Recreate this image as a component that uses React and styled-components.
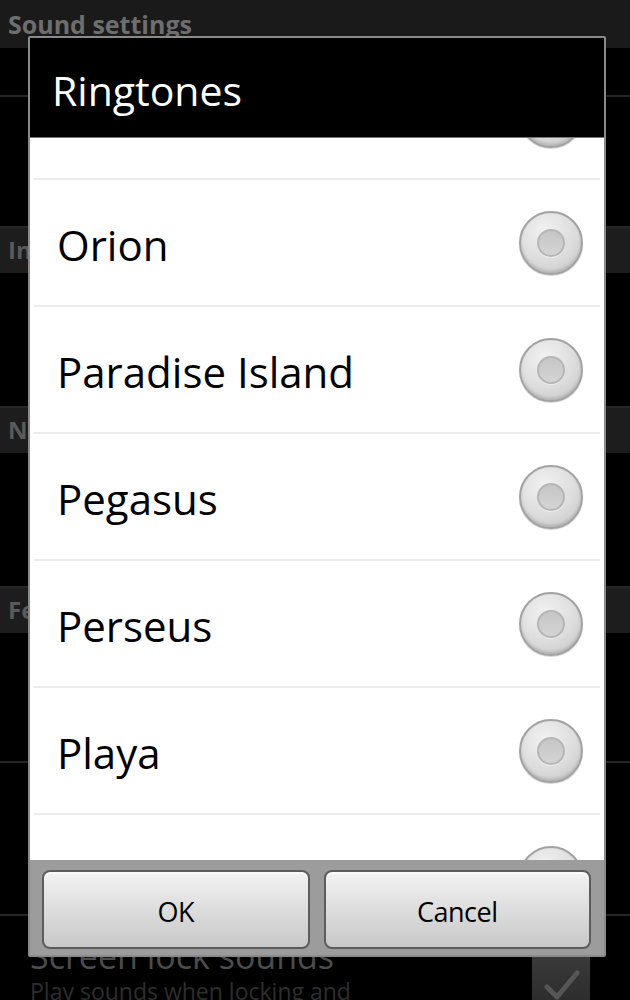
import React from 'react';
import styled, {createGlobalStyle} from 'styled-components';

const GlobalStyle = createGlobalStyle`
    html, body {
        margin: 0;
        padding: 0;
        background: #000;
    }
    body {
        font-family: "Open Sans", "Noto Sans", "DejaVu Sans", sans-serif;
    }
`

const tones = ['Orion', 'Paradise Island', 'Pegasus', 'Perseus', 'Playa']

// settings screen behind the dialog, only the edges of it show
const settings = [
    {type: 'row', height: 49},
    {type: 'row', height: 131},
    {type: 'cat', title: 'Incoming calls'},
    {type: 'row', height: 135},
    {type: 'cat', title: 'Notifications'},
    {type: 'row', height: 135},
    {type: 'cat', title: 'Feedback'},
    {type: 'row', height: 130},
    {type: 'row', height: 153},
]

function Radio() {
    return <RadioOuter><RadioInner /></RadioOuter>
}

function CheckBox() {
    return (
        <CheckTile>
            <svg width="40" height="40" viewBox="0 0 40 40">
                <path d="M6 22 L16 32 L36 8" fill="none" stroke="#565656" strokeWidth="5" strokeLinecap="round" strokeLinejoin="round" />
            </svg>
        </CheckTile>
    )
}

export default function App() {
    return (
        <Screen>
            <GlobalStyle />
            <TitleBar>Sound settings</TitleBar>
            {settings.map((item, i) => item.type === 'cat'
                ? <Category key={i}>{item.title}</Category>
                : <SettingRow key={i} height={item.height} />
            )}
            <LastRow>
                <LockText>
                    <LockTitle>Screen lock sounds</LockTitle>
                    <LockSub>Play sounds when locking and unlocking screen</LockSub>
                </LockText>
                <CheckBox />
            </LastRow>

            <Dialog>
                <Header>Ringtones</Header>
                <ListViewport>
                    <ListInner>
                        <ToneRow><span /><Radio /></ToneRow>
                        {tones.map(name => (
                            <ToneRow key={name}>
                                <ToneName>{name}</ToneName>
                                <Radio />
                            </ToneRow>
                        ))}
                        <ToneRow><span /><Radio /></ToneRow>
                    </ListInner>
                </ListViewport>
                <ButtonBar>
                    <Button>OK</Button>
                    <Button>Cancel</Button>
                </ButtonBar>
            </Dialog>
        </Screen>
    )
}

const Screen = styled.div`
    position: relative;
    width: 630px;
    height: 1000px;
    overflow: hidden;
    background: #000;
`

const TitleBar = styled.div`
    height: 48px;
    box-sizing: border-box;
    padding: 6px 8px 0;
    background: #1a1a1a;
    color: #6e6e6e;
    font-size: 25px;
    font-weight: 700;
    line-height: 36px;
`

const SettingRow = styled.div`
    height: ${p => p.height}px;
    box-sizing: border-box;
    border-bottom: 2px solid #262626;
`

const Category = styled.div`
    height: 45px;
    box-sizing: border-box;
    padding: 6px 8px 0;
    background: #1d1d1d;
    color: #5a5a5a;
    font-size: 24px;
    font-weight: 700;
    line-height: 32px;
`

const LastRow = styled.div`
    display: flex;
    justify-content: space-between;
    align-items: flex-start;
    padding: 20px 40px 0 30px;
`

const LockText = styled.div`
    width: 400px;
`

const LockTitle = styled.div`
    color: #4c4c4c;
    font-size: 34px;
    line-height: 40px;
    white-space: nowrap;
`

const LockSub = styled.div`
    color: #2e2e2e;
    font-size: 23px;
    line-height: 30px;
`

const CheckTile = styled.div`
    width: 58px;
    height: 62px;
    margin-top: 18px;
    background: linear-gradient(#3a3a3a, #292929);
    border-radius: 4px;
    display: flex;
    align-items: center;
    justify-content: center;
`

const Dialog = styled.div`
    position: absolute;
    left: 28px;
    top: 36px;
    width: 578px;
    box-sizing: border-box;
    border: 2px solid #8a8a8a;
    border-radius: 2px;
    background: #000;
    display: flex;
    flex-direction: column;
`

const Header = styled.div`
    height: 100px;
    box-sizing: border-box;
    padding: 4px 22px 0;
    display: flex;
    align-items: center;
    color: #fff;
    font-size: 41px;
    border-bottom: 1px solid #777;
`

const ListViewport = styled.div`
    height: 722px;
    overflow: hidden;
    background: #fff;
`

const ListInner = styled.div`
    margin-top: -85px;
`

const ToneRow = styled.div`
    height: 127px;
    box-sizing: border-box;
    margin: 0 4px;
    padding: 0 17px 0 23px;
    border-bottom: 2px solid #ececec;
    display: flex;
    align-items: center;
    justify-content: space-between;
`

const ToneName = styled.span`
    color: #000;
    font-size: 42px;
    line-height: 1;
    padding-top: 4px;
`

const RadioOuter = styled.span`
    width: 64px;
    height: 64px;
    box-sizing: border-box;
    border-radius: 50%;
    border: 2px solid #a2a2a2;
    background: radial-gradient(circle at 40% 30%, #f2f2f2 0%, #dcdcdc 55%, #c2c2c2 100%);
    box-shadow: inset 0 -2px 3px rgba(0,0,0,0.14), 0 1px 1px rgba(0,0,0,0.18);
    display: flex;
    align-items: center;
    justify-content: center;
`

const RadioInner = styled.span`
    width: 28px;
    height: 28px;
    box-sizing: border-box;
    border-radius: 50%;
    border: 2px solid #b6b6b6;
    background: linear-gradient(#c6c6c6, #d4d4d4);
    box-shadow: 0 1px 0 #eeeeee;
`

const ButtonBar = styled.div`
    height: 95px;
    box-sizing: border-box;
    padding: 10px 13px 6px 12px;
    background: #9c9c9c;
    display: flex;
    gap: 14px;
`

const Button = styled.div`
    flex: 1;
    box-sizing: border-box;
    border: 2px solid #5c5c5c;
    border-radius: 8px;
    background: linear-gradient(#f3f3f3, #dddddd 50%, #c8c8c8);
    box-shadow: inset 0 2px 0 #fafafa;
    display: flex;
    align-items: center;
    justify-content: center;
    padding-top: 4px;
    color: #000;
    font-size: 27px;
    letter-spacing: -0.5px;
`
